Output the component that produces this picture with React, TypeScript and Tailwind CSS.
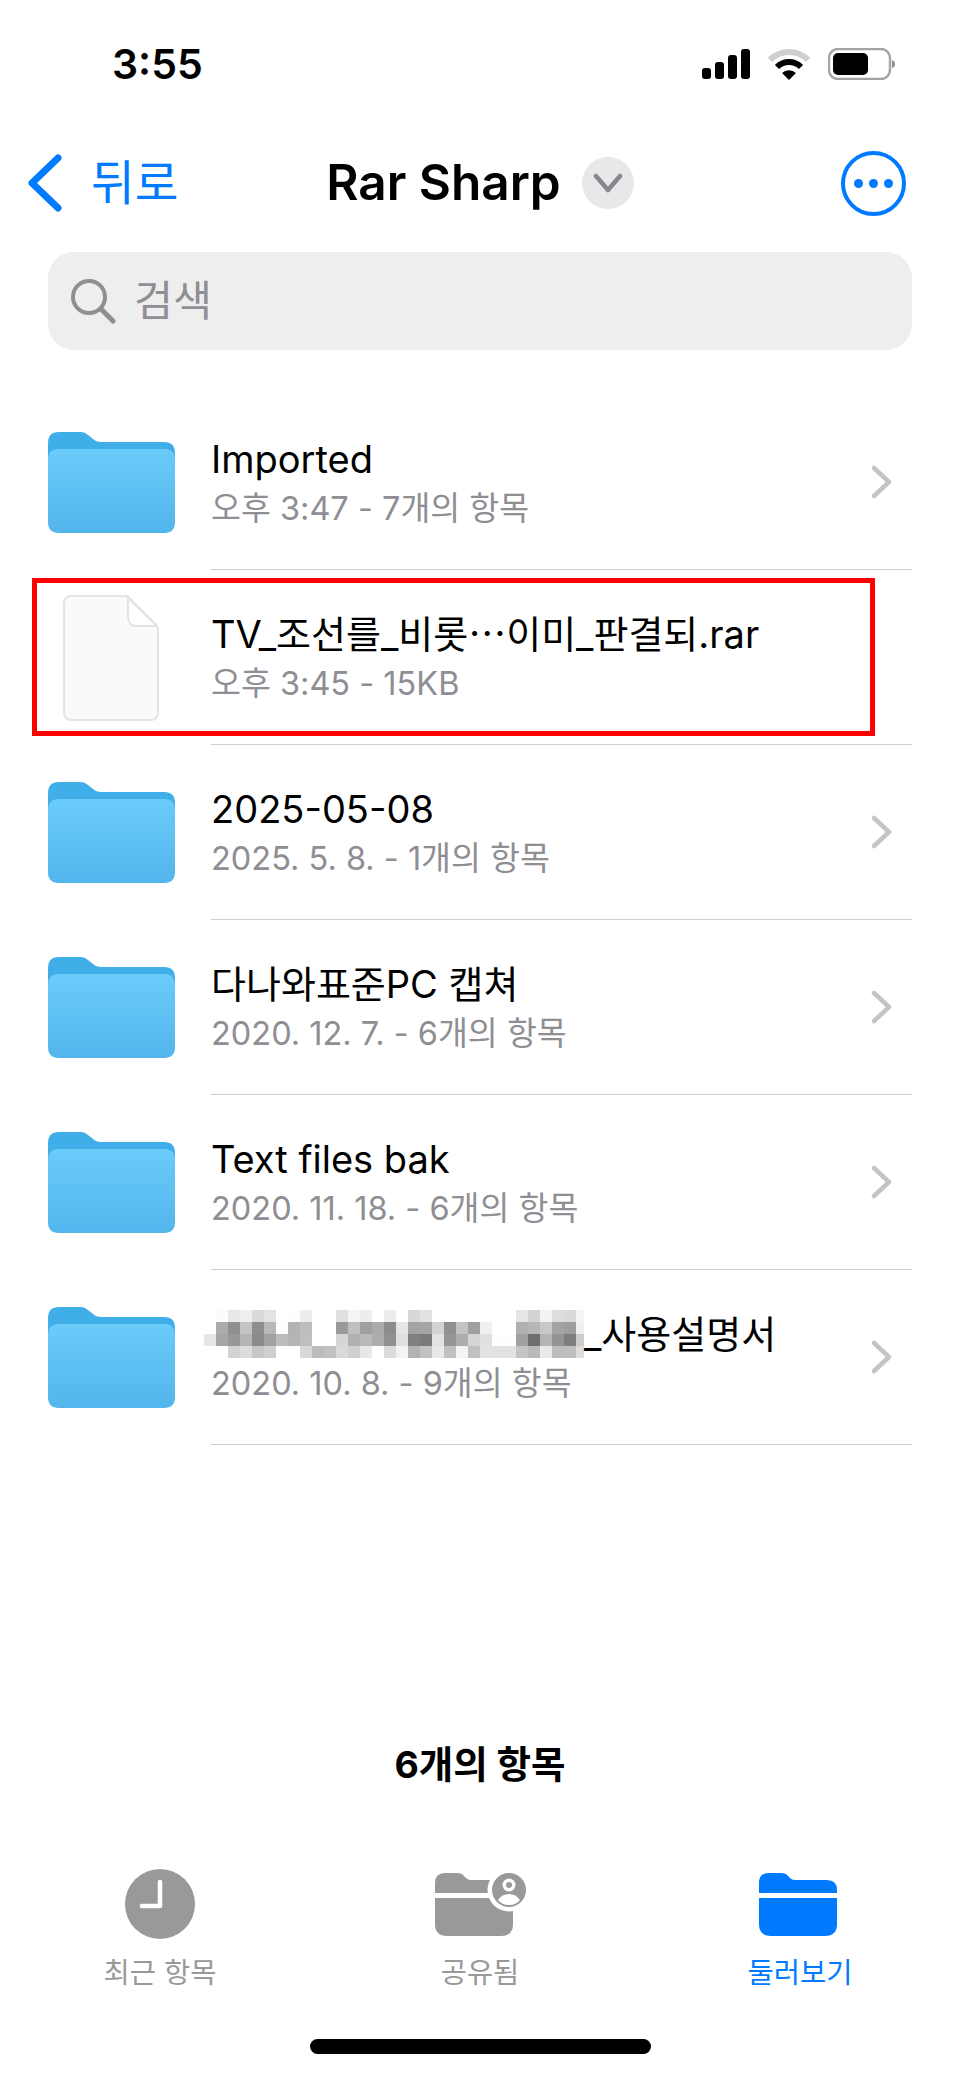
import React from "react";

const mosaic = [
  "ff fc e8 ee d9 e3 ff fd ed ff ff df f4 ed ff ec ff d8 e2 ff ff ff ff ff ff ff e5 d3 f3 dd da f4",
  "ff ab 8f c3 8e b8 fd b3 bd ff ff 9a bf a0 ab 8c e5 a3 a5 d3 90 c3 a0 f0 ff ff b0 b7 c8 a3 9e f0",
  "e6 a6 98 b5 8b a1 bc b5 bf ff ff d6 b0 b9 ad 90 df 80 7a e3 96 ad d5 e0 fe fe a0 6e b5 94 7e cc",
  "ff ff d3 dc c6 d0 ff ff d8 bc c2 d9 d0 e7 ff dc f3 b2 c2 e8 c0 f3 c0 e2 e2 e2 c4 ba e9 bd be dd",
].map((r) => r.split(" "));

function Mosaic() {
  return (
    <svg width="380" height="48" viewBox="0 0 380 48" className="shrink-0 -ml-[7px]">
      {mosaic.map((row, y) =>
        row.map((v, x) => (
          <rect key={`${x}-${y}`} x={x * 12} y={y * 12} width={x === 31 ? 8 : 12} height="12" fill={`#${v}${v}${v}`} />
        ))
      )}
    </svg>
  );
}

function Folder() {
  return (
    <svg width="127" height="101" viewBox="0 0 127 101" className="shrink-0">
      <defs>
        <linearGradient id="folderFront" x1="0" y1="0" x2="0" y2="1">
          <stop offset="0" stopColor="#6bcbf9" />
          <stop offset="1" stopColor="#52b5ec" />
        </linearGradient>
      </defs>
      <path d="M0 11 Q0 0 11 0 H33 Q37 0 40 3 L45 7 Q48 10 52 10 H116 Q127 10 127 21 V50 H0 Z" fill="#40aee9" />
      <path d="M0 28 Q0 17 11 17 H116 Q127 17 127 28 V90 Q127 101 116 101 H11 Q0 101 0 90 Z" fill="url(#folderFront)" />
    </svg>
  );
}

function FileIcon() {
  return (
    <svg width="96" height="126" viewBox="0 0 96 126" className="shrink-0 ml-[15px] mr-[16px]">
      <path
        d="M9 1 H63 Q65 1 67 3 L93 30 Q95 32 95 34 V117 Q95 125 87 125 H9 Q1 125 1 117 V9 Q1 1 9 1 Z"
        fill="#fafafa"
        stroke="#e4e4e4"
        strokeWidth="2"
      />
      <path d="M64 2 L94 31 H74 Q65 31 65 22 V3 Z" fill="#ffffff" stroke="#e4e4e4" strokeWidth="2" strokeLinejoin="round" />
      <path d="M66 1 L96 31 V0 Z" fill="#ffffff" />
    </svg>
  );
}

function ChevronRight() {
  return (
    <svg width="22" height="34" viewBox="0 0 22 34" className="shrink-0">
      <path d="M3 3 L18 17 L3 31" fill="none" stroke="#c4c4c7" strokeWidth="4.5" strokeLinecap="round" strokeLinejoin="round" />
    </svg>
  );
}

function Row({ title, sub, file = false, blurred = false }: { title: string; sub: string; file?: boolean; blurred?: boolean }) {
  return (
    <div className="relative flex h-[175px] items-center pl-[48px] pr-[48px]">
      {file ? <FileIcon /> : <Folder />}
      <div className="ml-[36px] flex h-full flex-1 items-center justify-between border-b border-[#cfcfd1] pr-[19px]">
        <div className="flex flex-col">
          <div className="flex h-[48px] items-center text-[38px] leading-[48px] text-black">
            {blurred && <Mosaic />}
            <span>{title}</span>
          </div>
          <div className="mt-[5px] text-[32.5px] leading-[42px] text-[#8e8e93]">{sub}</div>
        </div>
        {!file && <ChevronRight />}
      </div>
      {file && <div className="absolute left-[32px] top-[8px] h-[158px] w-[843px] border-[5px] border-[#ff0000]" />}
    </div>
  );
}

function TabFolder({ color }: { color: string }) {
  return (
    <svg width="78" height="63" viewBox="0 0 78 63" className="mr-[4px]">
      <path d="M0 10 Q0 0 10 0 H22 Q27 0 29 3 L31 5 Q33 7 36 7 H68 Q78 7 78 17 V20 H0 Z" fill={color} />
      <path d="M0 25 H78 V51 Q78 63 66 63 H12 Q0 63 0 51 Z" fill={color} />
    </svg>
  );
}

export default function App() {
  return (
    <div className="flex h-[2079px] w-[960px] flex-col overflow-hidden bg-white font-['Inter','Noto_Sans_CJK_KR',sans-serif]">
      {/* status bar */}
      <div className="flex h-[128px] items-center justify-between pl-[112px] pr-[65px]">
        <span className="text-[41px] font-semibold leading-none text-black">3:55</span>
        <div className="flex items-center">
          <svg width="48" height="30" viewBox="0 0 48 30" className="mr-[18px]">
            <rect x="0" y="19" width="9" height="11" rx="3" fill="#000" />
            <rect x="13" y="13" width="9" height="17" rx="3" fill="#000" />
            <rect x="26" y="6" width="9" height="24" rx="3" fill="#000" />
            <rect x="39" y="0" width="9" height="30" rx="3" fill="#000" />
          </svg>
          <svg width="42" height="32" viewBox="0 0 42 32" className="mr-[18px]">
            <path d="M1.9 11.9 A27 27 0 0 1 40.1 11.9" fill="none" stroke="#cfcfcf" strokeWidth="6" />
            <path d="M9 19 A17 17 0 0 1 33 19" fill="none" stroke="#000" strokeWidth="6" />
            <path d="M21 32 L14 25 A10 10 0 0 1 28 25 Z" fill="#000" />
          </svg>
          <svg width="67" height="32" viewBox="0 0 67 32">
            <rect x="1" y="1" width="61" height="30" rx="9" fill="none" stroke="#a3a3a3" strokeWidth="2.4" />
            <rect x="5" y="5" width="35" height="22" rx="5" fill="#000" />
            <path d="M64 12 Q67 13 67 16 Q67 19 64 20 Z" fill="#8e8e8e" />
          </svg>
        </div>
      </div>

      {/* navigation */}
      <div className="grid h-[110px] grid-cols-[1fr_auto_1fr] items-center">
        <div className="flex items-center pl-[28px]">
          <svg width="34" height="58" viewBox="0 0 34 58">
            <path d="M30 4 L4 29 L30 54" fill="none" stroke="#007aff" strokeWidth="7" strokeLinecap="round" strokeLinejoin="round" />
          </svg>
          <span className="ml-[29px] text-[47.5px] leading-none text-[#007aff]">뒤로</span>
        </div>
        <div className="flex items-center">
          <span className="text-[49.5px] font-semibold leading-none text-black">Rar Sharp</span>
          <span className="ml-[21px] flex h-[52px] w-[52px] items-center justify-center rounded-full bg-[#e8e8ea]">
            <svg width="30" height="20" viewBox="0 0 30 20">
              <path d="M3 3 L15 17 L27 3" fill="none" stroke="#88888c" strokeWidth="4.5" strokeLinecap="round" strokeLinejoin="round" />
            </svg>
          </span>
        </div>
        <div className="flex justify-end pr-[54px]">
          <svg width="65" height="65" viewBox="0 0 65 65">
            <circle cx="32.5" cy="32.5" r="30.5" fill="none" stroke="#007aff" strokeWidth="4" />
            <circle cx="17.5" cy="32.5" r="4.5" fill="#007aff" />
            <circle cx="32.5" cy="32.5" r="4.5" fill="#007aff" />
            <circle cx="47.5" cy="32.5" r="4.5" fill="#007aff" />
          </svg>
        </div>
      </div>

      {/* search */}
      <div className="mx-[48px] mt-[14px] flex h-[98px] items-center rounded-[26px] bg-[#eeeeef] pl-[22px]">
        <svg width="46" height="46" viewBox="0 0 46 46">
          <circle cx="19" cy="19" r="16" fill="none" stroke="#8e8e93" strokeWidth="4" />
          <path d="M31 31 L43 43" fill="none" stroke="#8e8e93" strokeWidth="5" strokeLinecap="round" />
        </svg>
        <span className="ml-[18px] text-[42.5px] leading-none text-[#8e8e93]">검색</span>
      </div>

      {/* list */}
      <div className="mt-[45px]">
        <Row title="Imported" sub="오후 3:47 - 7개의 항목" />
        <Row title="TV_조선를_비롯⋯이미_판결되.rar" sub="오후 3:45 - 15KB" file />
        <Row title="2025-05-08" sub="2025. 5. 8. - 1개의 항목" />
        <Row title="다나와표준PC 캡쳐" sub="2020. 12. 7. - 6개의 항목" />
        <Row title="Text files bak" sub="2020. 11. 18. - 6개의 항목" />
        <Row title="_사용설명서" sub="2020. 10. 8. - 9개의 항목" blurred />
      </div>

      {/* count */}
      <div className="mt-[295px] text-center text-[37.5px] font-bold leading-[50px] text-black">6개의 항목</div>

      {/* tabs */}
      <div className="mt-[79px] grid grid-cols-3">
        <div className="flex flex-col items-center">
          <div className="flex h-[70px] items-center">
            <svg width="70" height="70" viewBox="0 0 70 70">
              <circle cx="35" cy="35" r="35" fill="#999999" />
              <path d="M35 13 V37 H17" fill="none" stroke="#ffffff" strokeWidth="4.5" strokeLinecap="round" strokeLinejoin="round" />
            </svg>
          </div>
          <span className="mt-[16px] text-[28.5px] leading-[36px] text-[#999999]">최근 항목</span>
        </div>
        <div className="flex flex-col items-center">
          <div className="flex h-[70px] items-center">
            <svg width="96" height="63" viewBox="0 0 96 63" className="ml-[6px]">
              <path d="M0 10 Q0 0 10 0 H22 Q27 0 29 3 L31 5 Q33 7 36 7 H68 Q78 7 78 17 V20 H0 Z" fill="#999999" />
              <path d="M0 25 H78 V51 Q78 63 66 63 H12 Q0 63 0 51 Z" fill="#999999" />
              <circle cx="74" cy="17" r="21.5" fill="#ffffff" />
              <circle cx="74" cy="17" r="17" fill="#999999" />
              <circle cx="74" cy="12" r="6.5" fill="#ffffff" />
              <circle cx="74" cy="12" r="3" fill="#999999" />
              <path d="M63 27 Q67 21 74 21 Q81 21 85 27 Q81 32 74 32 Q67 32 63 27 Z" fill="#ffffff" />
            </svg>
          </div>
          <span className="mt-[16px] text-[28.5px] leading-[36px] text-[#999999]">공유됨</span>
        </div>
        <div className="flex flex-col items-center">
          <div className="flex h-[70px] items-center">
            <TabFolder color="#007aff" />
          </div>
          <span className="mt-[16px] text-[28.5px] leading-[36px] text-[#007aff]">둘러보기</span>
        </div>
      </div>

      {/* home indicator */}
      <div className="mx-auto mt-[48px] h-[15px] w-[341px] rounded-full bg-black" />
    </div>
  );
}
